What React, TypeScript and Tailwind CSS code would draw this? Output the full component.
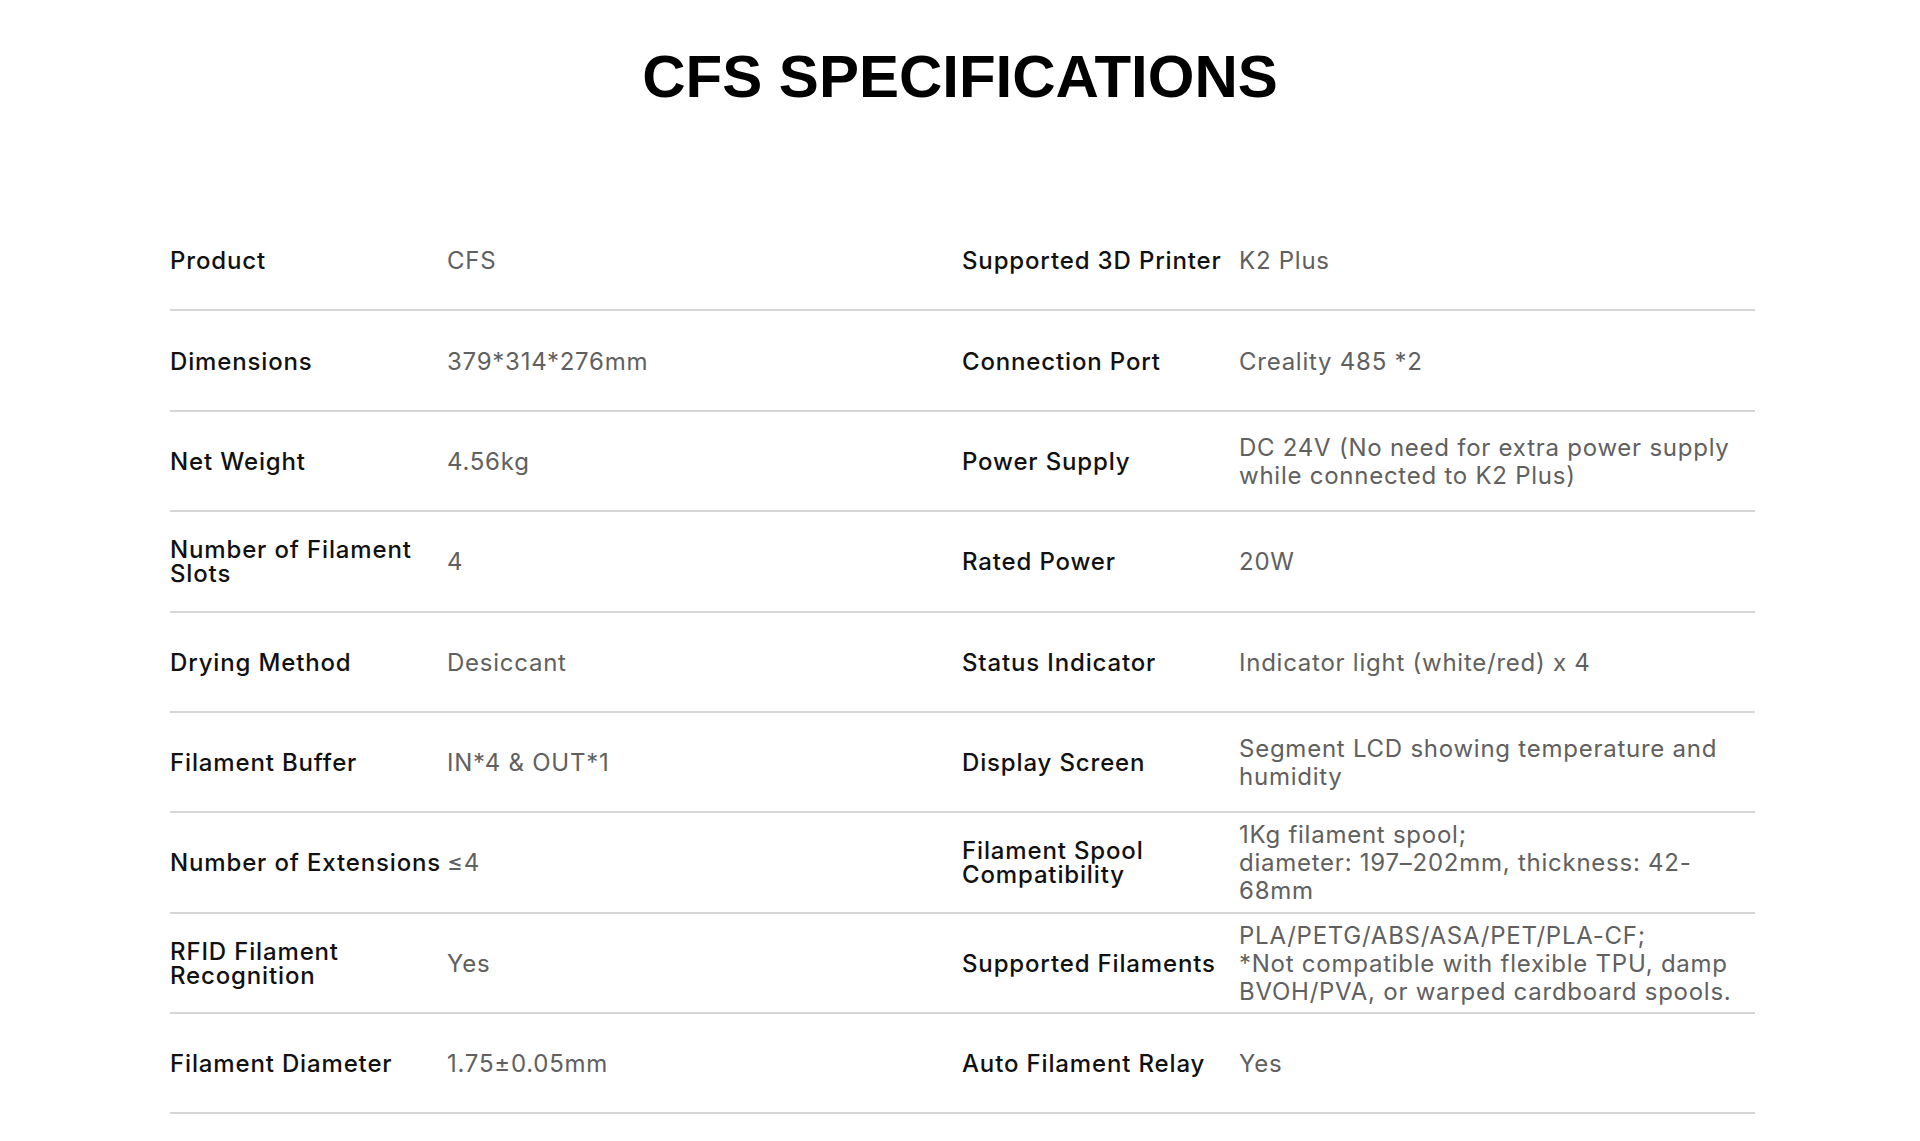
import React from "react";

type Row = { l1: React.ReactNode; v1: React.ReactNode; l2: React.ReactNode; v2: React.ReactNode };

const rows: Row[] = [
  { l1: "Product", v1: "CFS", l2: "Supported 3D Printer", v2: "K2 Plus" },
  { l1: "Dimensions", v1: "379*314*276mm", l2: "Connection Port", v2: "Creality 485 *2" },
  {
    l1: "Net Weight",
    v1: "4.56kg",
    l2: "Power Supply",
    v2: (
      <>
        DC 24V (No need for extra power supply
        <br />
        while connected to K2 Plus)
      </>
    ),
  },
  {
    l1: (
      <>
        Number of Filament
        <br />
        Slots
      </>
    ),
    v1: "4",
    l2: "Rated Power",
    v2: "20W",
  },
  { l1: "Drying Method", v1: "Desiccant", l2: "Status Indicator", v2: "Indicator light (white/red) x 4" },
  {
    l1: "Filament Buffer",
    v1: "IN*4 & OUT*1",
    l2: "Display Screen",
    v2: (
      <>
        Segment LCD showing temperature and
        <br />
        humidity
      </>
    ),
  },
  {
    l1: "Number of Extensions",
    v1: "≤4",
    l2: (
      <>
        Filament Spool
        <br />
        Compatibility
      </>
    ),
    v2: (
      <>
        1Kg filament spool;
        <br />
        diameter: 197–202mm, thickness: 42-
        <br />
        68mm
      </>
    ),
  },
  {
    l1: (
      <>
        RFID Filament
        <br />
        Recognition
      </>
    ),
    v1: "Yes",
    l2: "Supported Filaments",
    v2: (
      <>
        PLA/PETG/ABS/ASA/PET/PLA-CF;
        <br />
        *Not compatible with flexible TPU, damp
        <br />
        BVOH/PVA, or warped cardboard spools.
      </>
    ),
  },
  { l1: "Filament Diameter", v1: "1.75±0.05mm", l2: "Auto Filament Relay", v2: "Yes" },
];

function Label({ children }: { children: React.ReactNode }) {
  return (
    <div className="pt-[2px] text-[24px] leading-[24px] font-medium tracking-[0.85px] text-[#111111] whitespace-nowrap">
      {children}
    </div>
  );
}

function Value({ children }: { children: React.ReactNode }) {
  return (
    <div className="pt-[2px] text-[24px] leading-[28px] font-normal tracking-[0.75px] text-[#606060] whitespace-nowrap">
      {children}
    </div>
  );
}

export default function App() {
  return (
    <div className="w-full h-[1141px] bg-white font-['Inter',sans-serif] overflow-hidden">
      <h1 className="pt-[47px] text-center text-[60px] leading-none font-bold text-black font-['Liberation_Sans',Arial,sans-serif]">
        CFS SPECIFICATIONS
      </h1>
      <div className="ml-[170px] mt-[104px] w-[1585px]">
        {rows.map((r, i) => (
          <div
            key={i}
            className="grid grid-cols-[277px_515px_277px_516px] items-center h-[100.375px] border-b-2 border-[#d6d6d6]"
          >
            <Label>{r.l1}</Label>
            <Value>{r.v1}</Value>
            <Label>{r.l2}</Label>
            <Value>{r.v2}</Value>
          </div>
        ))}
      </div>
    </div>
  );
}
